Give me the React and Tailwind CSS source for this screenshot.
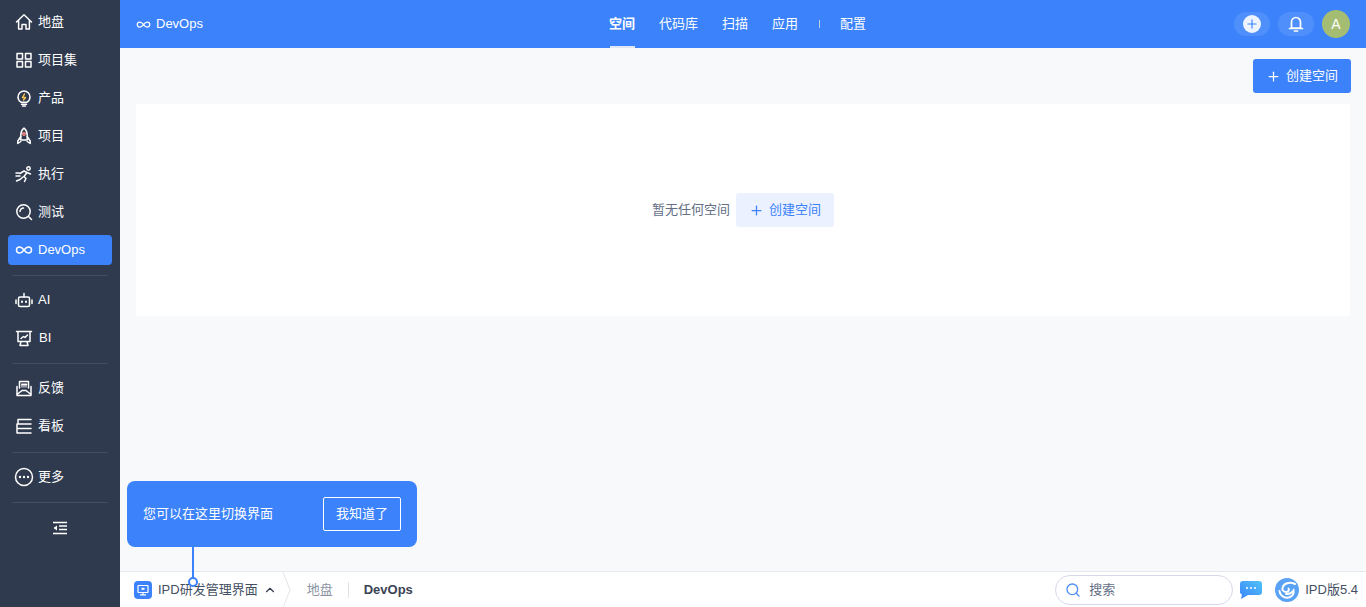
import React from 'react';
import { Plus, ChevronUp, Search } from 'lucide-react';

const S = { fill: 'none', stroke: 'currentColor', strokeWidth: 1.5, strokeLinecap: 'round', strokeLinejoin: 'round' };

const Icon = ({ children, size = 18 }) => (
    <svg width={size} height={size} viewBox="0 0 18 18" className="shrink-0" {...S}>{children}</svg>
);

const HomeIcon = () => <Icon><path d="M1.5 9 9 1.8 16.5 9M3.6 7.5V16H7v-4.5h4V16h3.4V7.5" /></Icon>;
const GridIcon = () => <Icon><rect x="2" y="2.5" width="5.5" height="5.5" /><rect x="10.5" y="2.5" width="5.5" height="5.5" /><rect x="2" y="10.5" width="5.5" height="5.5" /><rect x="10.5" y="10.5" width="5.5" height="5.5" /></Icon>;
const BulbIcon = () => <Icon><path d="M6 13.2C4 12 3 10.2 3 8a6 6 0 0 1 12 0c0 2.200-1 4-3 5.200Z" /><path d="M6.500 15.200h5M7.500 17h3" /><path d="M9.500 5 7.500 8.500h3L8.500 11" stroke="#f5c451" /></Icon>;
const RocketIcon = () => <Icon><path d="M9 1c2.400 2 3.200 4.500 3.200 7v5H5.800V8C5.800 5.500 6.600 3 9 1Z" /><path d="M5.800 9.500 2.800 14v2.500l3-2M12.200 9.500l3 4.500v2.500l-3-2" /><circle cx="9" cy="7" r="1.200" stroke="#f28b82" /></Icon>;
const RunIcon = () => <Icon><circle cx="13.500" cy="3.500" r="1.700" /><path d="M5 8.500 9 6l3 1.500-3 4 2 2-1.500 3M12 7.500l3.500 1.500M8 12 5 14.500 1.500 16M1 8h3M1 11h4" /></Icon>;
const TestIcon = () => <Icon><circle cx="8.500" cy="8.500" r="6.700" /><path d="m13.500 13.500 3 3M5 8.500A3.500 3.500 0 0 1 8.500 5" /></Icon>;
const InfinityIcon = ({ size = 18 }) => <Icon size={size}><path d="M9 9c-1.500-2-3-3-4.500-3a3 3 0 0 0 0 6C6 12 7.500 11 9 9c1.500-2 3-3 4.500-3a3 3 0 0 1 0 6C12 12 10.500 11 9 9Z" /></Icon>;
const RobotIcon = () => <Icon><rect x="3.500" y="6" width="11" height="9.500" rx="1.500" /><path d="M9 6V2.500M1 9v3.500M17 9v3.500" /><path d="M7 10.500v.5M11 10.500v.5" strokeWidth="2" /></Icon>;
const BoardIcon = () => <Icon><path d="M1.500 2.500h15M3 2.500v10h12v-10M6 12.500l-1 4M12 12.500l1 4M6 16.500h6M6 9.500l2.500-2 1.500 1 2.500-2.500" /></Icon>;
const MailIcon = () => <Icon><path d="M4.500 9V2.500h9V9M2 7.500v9h14v-9M2 15.500l5-4h4l5 4M7 5.500h4.500" /><rect x="6" y="4.500" width="6" height="4" fill="currentColor" stroke="none" opacity="0.5" /></Icon>;
const KanbanIcon = () => <Icon><path d="M3 2.500h13M2 7h14M2 7v4.500M2 11.500h14M3 16h13M2 11.500V16M3 2.500V7" /></Icon>;
const MoreIcon = () => (
    <svg width="20" height="20" viewBox="0 0 20 20" className="shrink-0" {...S}>
        <circle cx="10" cy="10" r="8.500" />
        <path d="M6 10h.01M10 10h.01M14 10h.01" strokeWidth="2.400" />
    </svg>
);
const CollapseIcon = () => (
    <svg width="14" height="14" viewBox="0 0 14 14" fill="none" stroke="currentColor" strokeWidth="1.500">
        <path d="M0 1.500h14M6 5h8M6 8.500h8M0 12.500h14" />
        <path d="M4 4.500v5L.5 7Z" fill="currentColor" stroke="none" />
    </svg>
);

const NavItem = ({ icon, label, active, labelClass = '' }) => (
    <div className={`flex h-[30px] items-center gap-[5px] rounded pl-[7px] text-[13px] text-white ${active ? 'bg-[#3b82fb]' : ''}`}>
        <span className="flex w-[18px] justify-center">{icon}</span>
        <span className={labelClass}>{label}</span>
    </div>
);

const Divider = ({ className }) => <div className={`mx-1 h-px bg-[#454e60] ${className}`} />;

const Sidebar = () => (
    <aside className="flex h-full w-[120px] shrink-0 flex-col bg-[#303a4e] px-2 pt-[7px]">
        <div className="flex flex-col gap-2">
            <NavItem icon={<HomeIcon />} label="地盘" />
            <NavItem icon={<GridIcon />} label="项目集" />
            <NavItem icon={<BulbIcon />} label="产品" />
            <NavItem icon={<RocketIcon />} label="项目" />
            <NavItem icon={<RunIcon />} label="执行" />
            <NavItem icon={<TestIcon />} label="测试" />
            <NavItem icon={<InfinityIcon />} label="DevOps" active />
        </div>
        <Divider className="mt-[10px] mb-[9px]" />
        <div className="flex flex-col gap-2">
            <NavItem icon={<RobotIcon />} label="AI" />
            <NavItem icon={<BoardIcon />} label="BI" labelClass="ml-px" />
        </div>
        <Divider className="mt-[10px] mb-[9px]" />
        <div className="flex flex-col gap-2">
            <NavItem icon={<MailIcon />} label="反馈" />
            <NavItem icon={<KanbanIcon />} label="看板" />
        </div>
        <Divider className="mt-[11px] mb-[9px]" />
        <NavItem icon={<MoreIcon />} label="更多" />
        <Divider className="mt-[10px] mb-[18px]" />
        <div className="flex justify-center text-white"><CollapseIcon /></div>
    </aside>
);

const TopBar = () => {
    const tabs = ['空间', '代码库', '扫描', '应用'];
    return (
        <header className="relative flex h-12 shrink-0 items-center justify-between bg-[#3b82fb] pl-4 pr-4 text-white">
            <div className="flex items-center gap-[5px] text-[13px]">
                <InfinityIcon size={15} />
                <span>DevOps</span>
            </div>
            <nav className="absolute left-[489px] top-0 flex h-12 items-center text-[13px]">
                {tabs.map((t, i) => (
                    <div key={t} className={`relative mr-6 flex h-12 items-center ${i === 0 ? 'font-bold' : ''}`}>
                        {t}
                        {i === 0 && <span className="absolute bottom-0 left-px right-0 h-[2px] bg-[#dfe9f5]" />}
                    </div>
                ))}
                <span className="mr-[20px] -ml-[3px] h-2 w-px bg-[#b9c9e6]" />
                <span>配置</span>
            </nav>
            <div className="flex items-center gap-2">
                <span className="flex h-6 w-9 items-center justify-center rounded-full bg-white/10">
                    <span className="flex h-[18px] w-[18px] items-center justify-center rounded-full bg-[#eef4ff] text-[#3b82fb]">
                        <Plus size={14} strokeWidth={2} />
                    </span>
                </span>
                <span className="flex h-6 w-9 items-center justify-center rounded-full bg-white/10">
                    <svg width="16" height="18" viewBox="0 0 16 18" fill="none" stroke="white" strokeWidth="1.700" strokeLinejoin="round" strokeLinecap="round">
                        <path d="M3.500 13V7a4.500 4.500 0 0 1 9 0v6ZM1.500 13.500h13M6.500 16h3" />
                    </svg>
                </span>
                <span className="flex h-7 w-7 items-center justify-center rounded-full bg-[#a4bd72] text-sm">A</span>
            </div>
        </header>
    );
};

const Content = () => (
    <main className="flex min-h-0 flex-1 flex-col bg-[#f8f9fb] pl-4 pr-4">
        <div className="flex h-[56px] shrink-0 items-start justify-end pt-[11px] -mr-px">
            <button className="flex h-[34px] w-[98px] items-center justify-center gap-[5px] rounded-[3px] bg-[#3b82fb] text-[13px] text-white">
                <Plus size={15} />
                创建空间
            </button>
        </div>
        <div className="flex h-[212px] items-center justify-center gap-[6px] bg-white pb-[-2px] text-[13px]">
            <span className="text-[#646f85]">暂无任何空间</span>
            <button className="flex h-[34px] w-[98px] items-center justify-center gap-[5px] rounded-[3px] bg-[#ebf1fe] text-[#3b82fb]">
                <Plus size={15} />
                创建空间
            </button>
        </div>
    </main>
);

const BottomBar = () => (
    <footer className="relative flex h-9 shrink-0 items-center border-t border-[#e7e9ee] bg-white text-[13px]">
        <div className="flex items-center pl-[14px]">
            <span className="flex h-[18px] w-[18px] items-center justify-center rounded-[4px] bg-[#3b82fb]">
                <svg width="12" height="12" viewBox="0 0 12 12" fill="none" stroke="white" strokeWidth="1.200">
                    <rect x="1" y="1.500" width="10" height="7" rx="0.500" />
                    <path d="M3 10.800h6M6 8.500v2" />
                    <rect x="4.500" y="3.800" width="3" height="2" fill="white" stroke="none" />
                </svg>
            </span>
            <span className="ml-[6px] text-[#444f63]">IPD研发管理界面</span>
            <ChevronUp size={14} className="ml-[5px] text-[#333c4e]" />
        </div>
        <svg width="10" height="36" viewBox="0 0 10 36" fill="none" stroke="#e3e5ea" className="ml-[5px]">
            <path d="M1 0 8 18 1 36" />
        </svg>
        <span className="ml-[15px] text-[#8b93a3]">地盘</span>
        <span className="ml-[15px] h-4 w-px bg-[#dfe1e6]" />
        <span className="ml-[15px] font-bold text-[#3a4353]">DevOps</span>
        <div className="ml-auto flex items-center">
            <div className="flex h-[30px] w-[178px] items-center rounded-full border border-[#d5d9ea] pl-[9px] text-[#646f85]">
                <Search size={16} className="text-[#4c8df5]" />
                <span className="ml-[8px]">搜索</span>
            </div>
            <svg width="24" height="20" viewBox="0 0 24 20" className="ml-[6px]">
                <defs>
                    <linearGradient id="chat" x1="0" y1="1" x2="1" y2="0">
                        <stop offset="0" stopColor="#3b82fb" />
                        <stop offset="1" stopColor="#4fc3f7" />
                    </linearGradient>
                </defs>
                <path d="M4 1h16a3 3 0 0 1 3 3v8a3 3 0 0 1-3 3H9l-7 4 1-4.500C1.500 14 1 13 1 12V4a3 3 0 0 1 3-3Z" fill="url(#chat)" />
                <path d="M8 8h.01M12 8h.01M16 8h.01" stroke="white" strokeWidth="2" strokeLinecap="round" />
            </svg>
            <svg width="24" height="24" viewBox="0 0 24 24" className="ml-[12px]" fill="none">
                <circle cx="12" cy="12" r="12" fill="#5aa2f5" />
                <path d="M20 6c-4-2-10-1.500-12 2.500-1.500 3 0 5.500 3 5.500 2.500 0 3.500-2 2.500-3.500M4.500 13c.5 5 6 8 10.500 6 3-1.500 4-4 3.500-6.500-2 3-4.500 4-7.500 3.500" stroke="white" strokeWidth="2" strokeLinecap="round" />
            </svg>
            <span className="ml-[6px] mr-2 text-[#444f63]">IPD版5.4</span>
        </div>
    </footer>
);

const GuideTip = () => (
    <div className="absolute bottom-[60px] left-[7px] flex h-[66px] w-[290px] items-center justify-between rounded-lg bg-[#3b82fb] pl-4 pr-4 text-[13px] text-white">
        <span>您可以在这里切换界面</span>
        <button className="flex h-[34px] w-[78px] items-center justify-center rounded-[2px] border border-white">我知道了</button>
        <span className="absolute left-[65px] top-[66px] h-[34px] w-[2px] bg-[#3b82fb]" />
        <span className="absolute left-[61px] top-[96px] h-[10px] w-[10px] rounded-full border-2 border-[#3b82fb] bg-white" />
    </div>
);

export default function App() {
    return (
        <div
            className="flex h-[607px] w-[1366px] overflow-hidden"
            style={{ fontFamily: '"Liberation Sans", "Noto Sans CJK SC", sans-serif' }}
        >
            <Sidebar />
            <div className="relative flex min-w-0 flex-1 flex-col">
                <TopBar />
                <Content />
                <BottomBar />
                <GuideTip />
            </div>
        </div>
    );
}
